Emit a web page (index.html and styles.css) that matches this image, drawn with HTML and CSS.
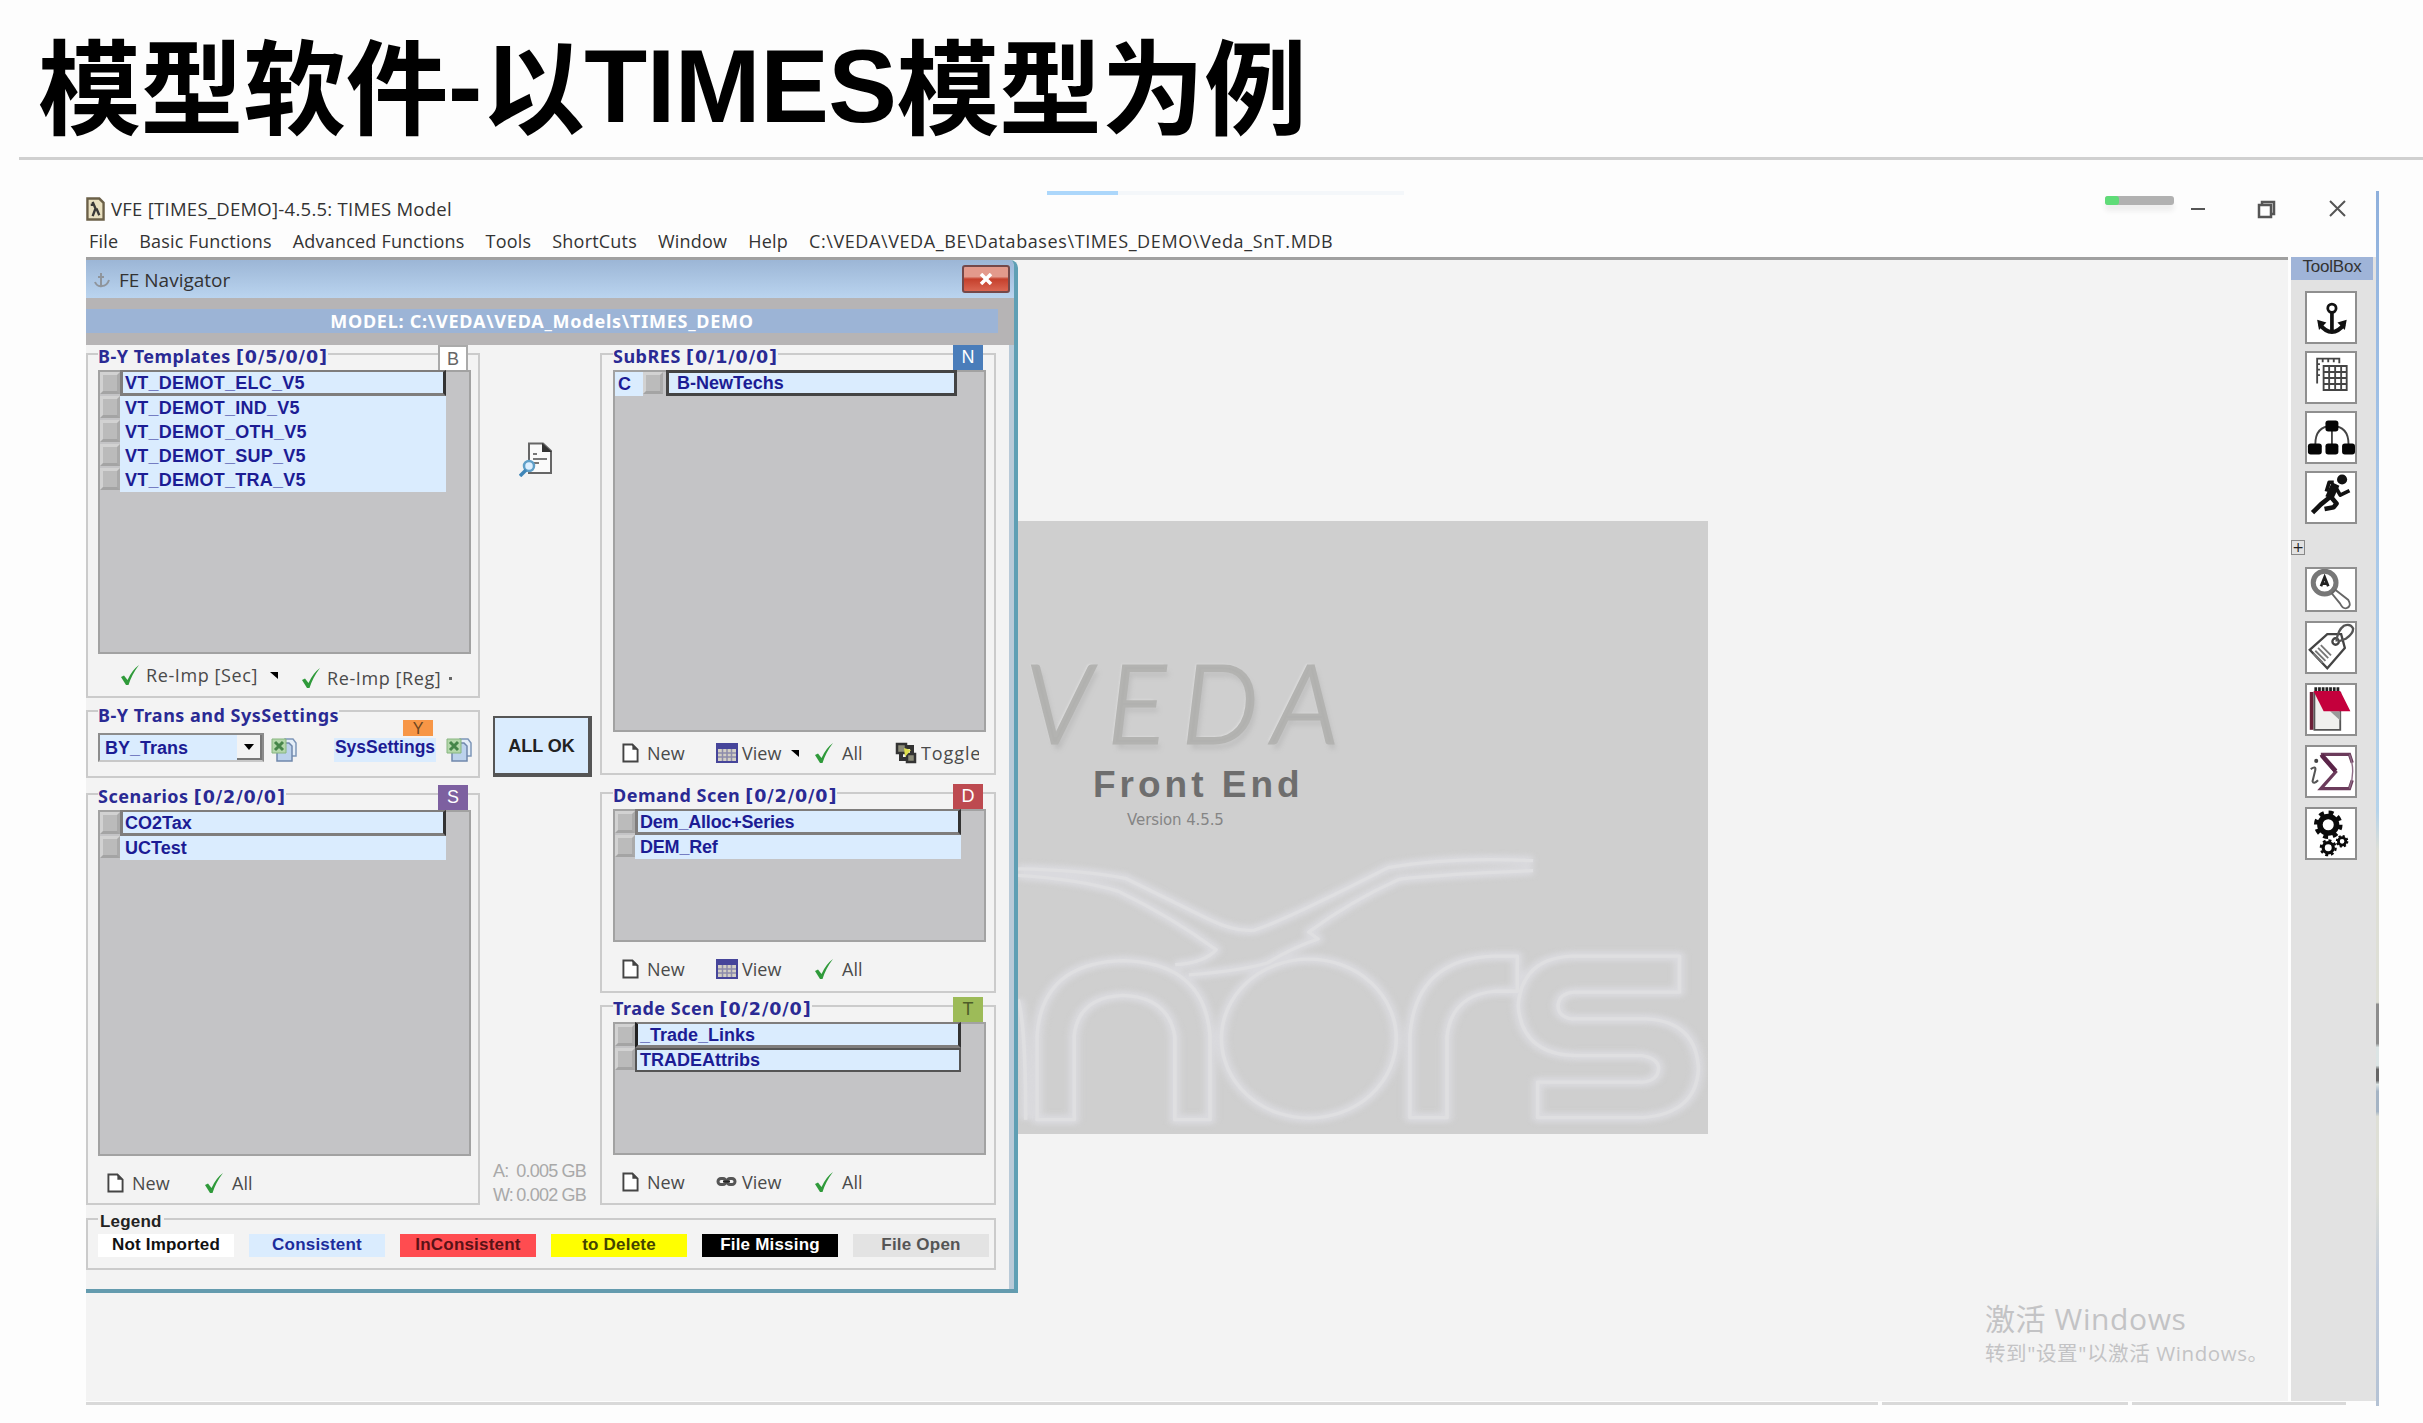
FILE: index.html
```html
<!DOCTYPE html>
<html lang="zh">
<head>
<meta charset="utf-8">
<title>模型软件-以TIMES模型为例</title>
<link rel="stylesheet" href="styles.css">
</head>
<body>
<svg class="defs" width="0" height="0">
  <symbol id="check" viewBox="0 0 20 22"><path d="M1 13 L4 11.500 L7.500 16 Q12 6 19 1 Q12 10 8.500 21 L6 21 Z" fill="#2f9a3a"/></symbol>
  <symbol id="page" viewBox="0 0 18 21"><path d="M1.500 1.500 H11 L16.500 7 V19.500 H1.500 Z" fill="#fff" stroke="#444" stroke-width="2"/><path d="M11 1.500 V7 H16.500 Z" fill="#444"/></symbol>
  <symbol id="table" viewBox="0 0 22 22"><path d="M0 1H22V21H0Z" fill="#46459a"/><path d="M2 7H20V19H2Z" fill="#d3cfc4"/><path d="M6.500 7V19M11 7V19M15.500 7V19M2 11H20M2 15H20" stroke="#8d8cab" stroke-width="1.500"/></symbol>
  <symbol id="excel" viewBox="0 0 26 24"><path d="M14 1H22L25 5V18H14Z" fill="#e4eef8" stroke="#7d96b8" stroke-width="1.500"/><path d="M6 5H18L21 8V23H6Z" fill="#bcd2ec" stroke="#7088ac" stroke-width="1.500"/><path d="M1 1H15V15H1Z" fill="#b4d7ab" stroke="#86b57e"/><path d="M4 4L12 12M12 4L4 12" stroke="#46854a" stroke-width="3"/></symbol>
</svg>

<header class="slide-head"><h1>模型软件<span>-</span>以<span>TIMES</span>模型为例</h1></header>

<main class="app">
  <div class="loading"><i></i></div>
  <div class="titlebar">
    <svg class="app-icon" viewBox="0 0 20 25"><path d="M1.500 1.500H14L18.500 6V23.500H1.500Z" fill="#e9e0c0" stroke="#6b6048" stroke-width="2.500"/><path d="M5 8H9M7 5L10 12L7 20M11 12L14 19" stroke="#3b3a38" stroke-width="2.500" fill="none"/></svg>
    <span class="app-name">VFE [TIMES_DEMO]-4.5.5: TIMES Model</span>
    <div class="meter"><i></i></div>
    <svg class="controls" viewBox="0 0 160 20"><g fill="none" stroke="#555" stroke-width="2"><path d="M3 10H17"/><path d="M71 6H83V18H71ZM74 6V3H86V15H83" stroke-width="2.500"/><path d="M142 2L157 17M157 2L142 17"/></g></svg>
  </div>
  <nav class="menu"><span>File</span><span>Basic Functions</span><span>Advanced Functions</span><span>Tools</span><span>ShortCuts</span><span>Window</span><span>Help</span><span class="path">C:\VEDA\VEDA_BE\Databases\TIMES_DEMO\Veda_SnT.MDB</span></nav>

  <div class="work">
    <section class="desktop">
      <div class="splash">
        <svg class="mark" viewBox="18 27 1523 1503" preserveAspectRatio="none">
          <defs><g id="outline">
            <path d="M18 880 Q150 882 255 903 L440 1004 Q500 1036 540 1030 Q600 1010 835 877 Q970 850 1155 860"/>
            <path d="M18 896 Q150 905 240 935 Q360 1000 455 1078 Q430 1110 365 1115"/>
            <path d="M1155 884 Q960 893 860 905 Q750 960 660 1035 L680 1052 Q620 1075 570 1110 Q520 1128 395 1140"/>
            <path d="M60 1495 V1290 Q70 1110 250 1105 Q430 1110 442 1290 V1495 H364 V1290 Q350 1195 250 1190 Q150 1195 142 1290 V1495 Z"/>
            <ellipse cx="660" cy="1296" rx="193" ry="195"/>
            <path d="M883 1490 V1290 Q895 1100 1070 1094 H1120 V1180 H1070 Q975 1190 965 1290 V1490 Z"/>
            <path d="M1478 1094 H1240 Q1130 1100 1122 1215 Q1130 1335 1250 1338 H1395 Q1432 1345 1432 1370 Q1430 1400 1395 1403 H1165 V1490 H1395 Q1515 1480 1520 1370 Q1515 1255 1405 1248 H1240 Q1210 1242 1210 1215 Q1212 1185 1245 1182 H1478 Z"/>
            <path d="M18 1200 Q35 1260 35 1495"/>
          </g></defs>
          <use href="#outline" class="glow"/><use href="#outline" class="line"/>
        </svg>
        <div class="brand">VEDA</div>
        <div class="product">Front End</div>
        <div class="version">Version 4.5.5</div>
      </div>

      <section class="navigator">
        <div class="nav-title">
          <svg class="nav-icon" viewBox="0 0 18 18"><path d="M8 2V15M2 11Q4 16 9 15Q14 15 16 9M5 6H11" fill="none" stroke="#8f959c" stroke-width="2"/></svg>
          <span>FE Navigator</span>
          <div class="close"><svg viewBox="0 0 14 12"><path d="M2 1L12 11M12 1L2 11" stroke="#fff" stroke-width="3.500"/></svg></div>
        </div>
        <div class="model"><div>MODEL: C:\VEDA\VEDA_Models\TIMES_DEMO</div></div>
        <div class="nav-body">
          <div class="columns">
            <div class="col left">
              <div class="group g-templates">
                <div class="head"><b>B-Y Templates <u>[0/5/0/0]</u></b><em class="tag tag-b">B</em></div>
                <div class="list">
                  <div class="row sel"><i></i><span>VT_DEMOT_ELC_V5</span></div>
                  <div class="row"><i></i><span>VT_DEMOT_IND_V5</span></div>
                  <div class="row"><i></i><span>VT_DEMOT_OTH_V5</span></div>
                  <div class="row"><i></i><span>VT_DEMOT_SUP_V5</span></div>
                  <div class="row"><i></i><span>VT_DEMOT_TRA_V5</span></div>
                </div>
                <div class="reimp">
                  <div class="btn"><svg class="i-check"><use href="#check"/></svg><span>Re-Imp [Sec]</span><svg class="tri" viewBox="0 0 8 7"><path d="M0 0H8V7Z"/></svg></div>
                  <div class="btn low"><svg class="i-check"><use href="#check"/></svg><span>Re-Imp [Reg]</span><i class="dot"></i></div>
                </div>
              </div>
              <div class="group g-trans">
                <div class="head"><b>B-Y Trans and SysSettings</b></div>
                <div class="trans">
                  <div class="combo"><span>BY_Trans</span><div><svg viewBox="0 0 10 6"><path d="M0 0H10L5 6Z"/></svg></div></div>
                  <svg class="i-excel"><use href="#excel"/></svg>
                  <div class="sys">SysSettings<em>Y</em></div>
                  <svg class="i-excel"><use href="#excel"/></svg>
                </div>
              </div>
              <div class="group g-scen">
                <div class="head"><b>Scenarios <u>[0/2/0/0]</u></b><em class="tag tag-s">S</em></div>
                <div class="list">
                  <div class="row sel"><i></i><span>CO2Tax</span></div>
                  <div class="row"><i></i><span>UCTest</span></div>
                </div>
                <div class="tools">
                  <div class="btn"><svg class="i-page"><use href="#page"/></svg><span>New</span></div>
                  <div class="btn"><svg class="i-check"><use href="#check"/></svg><span>All</span></div>
                </div>
              </div>
            </div>

            <div class="col middle">
              <svg class="preview" viewBox="0 0 34 35"><path d="M10 1.500H24L32 9V31H10Z" fill="#fafafa" stroke="#666" stroke-width="2"/><path d="M23 1V10H33Z" fill="#333"/><path d="M14 12H18M14 17H28M14 21H20" stroke="#777" stroke-width="2"/><circle cx="10" cy="24" r="5" fill="#dcefff" stroke="#5f9fc8" stroke-width="2.500"/><path d="M7 28L1 34" stroke="#3f86b8" stroke-width="3.500"/></svg>
              <div class="allok">ALL OK</div>
              <div class="mem"><div><span>A:</span><span>0.005 GB</span></div><div><span>W:</span><span>0.002 GB</span></div></div>
            </div>

            <div class="col right">
              <div class="group g-sub">
                <div class="head"><b>SubRES <u>[0/1/0/0]</u></b><em class="tag tag-n">N</em></div>
                <div class="list">
                  <div class="row sub"><b>C</b><i></i><span>B-NewTechs</span></div>
                </div>
                <div class="tools">
                  <div class="btn"><svg class="i-page"><use href="#page"/></svg><span>New</span></div>
                  <div class="btn view"><svg class="i-table"><use href="#table"/></svg><span>View</span><svg class="tri" viewBox="0 0 8 7"><path d="M0 0H8V7Z"/></svg></div>
                  <div class="btn"><svg class="i-check"><use href="#check"/></svg><span>All</span></div>
                  <div class="btn view toggle"><svg class="i-table" viewBox="0 0 22 22"><path d="M2 2H11V11H2ZM12 12H20V20H12Z" fill="#8c8c78" stroke="#333" stroke-width="2.500"/><path d="M10 5H17V11M12 17H6V11" fill="none" stroke="#333" stroke-width="4"/><path d="M9 6L16 8L10 15Z" fill="#dfe04c"/></svg><span>Toggle</span></div>
                </div>
              </div>
              <div class="group g-demand">
                <div class="head"><b>Demand Scen <u>[0/2/0/0]</u></b><em class="tag tag-d">D</em></div>
                <div class="list">
                  <div class="row sel"><i></i><span>Dem_Alloc+Series</span></div>
                  <div class="row"><i></i><span>DEM_Ref</span></div>
                </div>
                <div class="tools">
                  <div class="btn"><svg class="i-page"><use href="#page"/></svg><span>New</span></div>
                  <div class="btn view"><svg class="i-table"><use href="#table"/></svg><span>View</span></div>
                  <div class="btn"><svg class="i-check"><use href="#check"/></svg><span>All</span></div>
                </div>
              </div>
              <div class="group g-trade">
                <div class="head"><b>Trade Scen <u>[0/2/0/0]</u></b><em class="tag tag-t">T</em></div>
                <div class="list">
                  <div class="row sel first"><i></i><span>_Trade_Links</span></div>
                  <div class="row boxed"><i></i><span>TRADEAttribs</span></div>
                </div>
                <div class="tools">
                  <div class="btn"><svg class="i-page"><use href="#page"/></svg><span>New</span></div>
                  <div class="btn view"><svg class="i-table" viewBox="0 0 22 22"><g fill="none" stroke="#555" stroke-width="3"><rect x="2" y="7.500" width="8" height="6" rx="3"/><rect x="11" y="7.500" width="8" height="6" rx="3"/></g><path d="M7 10.500H14" stroke="#222" stroke-width="2"/></svg><span>View</span></div>
                  <div class="btn"><svg class="i-check"><use href="#check"/></svg><span>All</span></div>
                </div>
              </div>
            </div>
          </div>
          <div class="group legend">
            <b class="legend-name">Legend</b>
            <div class="keys">
              <span class="k-none">Not Imported</span><span class="k-ok">Consistent</span><span class="k-bad">InConsistent</span><span class="k-del">to Delete</span><span class="k-miss">File Missing</span><span class="k-open">File Open</span>
            </div>
          </div>
        </div>
      </section>

      <div class="activate"><p>激活 Windows</p><small>转到"设置"以激活 Windows。</small></div>
    </section>

    <aside class="toolbox">
      <div class="toolbox-name">ToolBox</div>
      <div class="stack">
        <svg viewBox="0 0 52 53"><g fill="none" stroke="#111"><circle cx="27" cy="16.500" r="4.500" stroke-width="3"/><path d="M27 21V41" stroke-width="4"/><path d="M14 34Q20 42 27 42Q34 42 40 34" stroke-width="4.500"/></g><path d="M11 29L21 32L13 40ZM43 29L33 32L41 40Z" fill="#111"/></svg>
        <svg viewBox="0 0 52 53"><g fill="none" stroke="#444" stroke-width="2"><path d="M11 33V6H35V11M11 12H14M11 18H14M11 24H14M17 6V10M23 6V10M29 6V10"/><path d="M18 14H43V40H18ZM24 14V40M30.500 14V40M37 14V40M18 20.500H43M18 27H43M18 33.500H43"/></g></svg>
        <svg viewBox="0 0 52 53"><path d="M9 34Q9 14 27 14Q45 14 45 34M27 14V34" fill="none" stroke="#444" stroke-width="2"/><g fill="#050505"><rect x="20" y="8" width="14" height="12" rx="3"/><rect x="1" y="33" width="15" height="12" rx="3"/><rect x="20" y="33" width="14" height="12" rx="3"/><rect x="38" y="33" width="14" height="12" rx="3"/></g></svg>
        <svg viewBox="0 0 52 53"><circle cx="38" cy="7" r="5.500" fill="#111"/><g fill="none" stroke="#111" stroke-linejoin="round"><path d="M31 12L24 27" stroke-width="9"/><path d="M29 10L24 10L21 20M32 17L36 24L46 19" stroke-width="4"/><path d="M25 26L15 34L6 43" stroke-width="5"/><path d="M26 26L32 33L29 37L19 39" stroke-width="5"/></g></svg>
        <div class="expand">+</div>
        <svg class="short" viewBox="0 0 52 45"><circle cx="19" cy="15" r="12.500" fill="#fff" stroke="#777" stroke-width="5.500"/><path d="M15 19L19 9L23 19M16.500 16H22" fill="none" stroke="#222" stroke-width="3"/><path d="M27 27L31 23L45 34Q49 41 43 43Q39 44 36 38Z" fill="#fff" stroke="#666" stroke-width="2"/></svg>
        <svg viewBox="0 0 52 53"><path d="M22 12H37L41 27L22 49L3 29Z" fill="#fff" stroke="#444" stroke-width="2.500"/><circle cx="31" cy="20" r="3.500" fill="none" stroke="#444" stroke-width="2.500"/><path d="M32 20Q33 8 40 3Q47 0 50 6Q50 12 42 17L34 20" fill="none" stroke="#555" stroke-width="2.500"/><path d="M9 30L20 41M12 27L23 38M15 24L26 35M7 33L17 43" stroke="#777" stroke-width="2"/></svg>
        <svg viewBox="0 0 52 52"><path d="M5 7V48" stroke="#6c2038" stroke-width="4"/><path d="M8 8H36V48H8Z" fill="#f0f0ee" stroke="#555" stroke-width="2"/><path d="M25 28H36V38Z" fill="#999"/><path d="M7 6H36L47 28H18Z" fill="#c4003c"/><path d="M8 4H36" stroke="#222" stroke-width="4" stroke-dasharray="3 1"/></svg>
        <svg viewBox="0 0 52 53"><path d="M15 8H46L49 17M15 8L31 27L15 45H46L49 36" fill="none" stroke="#6b3b5b" stroke-width="3.500"/><path d="M16 9L31 26" stroke="#5b2449" stroke-width="5"/><path d="M46 8Q53 26 46 45" fill="none" stroke="#8e6c86" stroke-width="1.500"/><circle cx="10" cy="15" r="2.200" fill="#444"/><path d="M4 24Q10 20 9 25L6 37Q7 41 12 36" fill="none" stroke="#555" stroke-width="2.200"/></svg>
        <svg viewBox="0 0 52 53"><g fill="none" stroke="#0a0a0a"><circle cx="23" cy="17" r="9" stroke-width="6"/><circle cx="23" cy="17" r="13" stroke-width="5" stroke-dasharray="5.200 5.010"/><circle cx="23" cy="42" r="5.500" stroke-width="3.500"/><circle cx="23" cy="42" r="8" stroke-width="2.500" stroke-dasharray="3.200 3.080"/><circle cx="38" cy="35" r="4" stroke-width="3"/><circle cx="38" cy="35" r="5.800" stroke-width="2" stroke-dasharray="2.300 2.250"/></g></svg>
      </div>
    </aside>
  </div>
  <footer class="status"><i></i><i></i><i></i></footer>
</main>
</body>
</html>
```

FILE: styles.css
```css
* { box-sizing: border-box; }
body { margin: 0; width: 2423px; height: 1423px; overflow: hidden; background: #fdfdfd; color: #333; font-family: "Open Sans", "Noto Sans CJK SC", sans-serif; font-size: 18px; line-height: 1; white-space: nowrap; }
.defs { position: absolute; }
i, em { font-style: normal; }
u { text-decoration: none; }
svg { display: block; flex: none; }

.slide-head { height: 160px; margin-left: 19px; padding: 39px 0 0 19px; border-bottom: 3px solid #d0d0d0; }
h1 { margin: 0; font: bold 103px/106px "Liberation Sans", "Noto Sans CJK SC", sans-serif; color: #000; letter-spacing: -0.500px; height: 106px; }
h1 span { line-height: 80px; vertical-align: 5px; }

.app { width: 2293px; height: 1215px; margin: 31px 0 0 86px; border: 0 solid; border-right-width: 3px; border-image: linear-gradient(#8fb0dc 0, #a6c6e8 300px, #b5d3ea 620px, #dedfd6 660px 811px, #8d8d8d 813px 852px, #dbe4e4 856px 874px, #666 878px 889px, #dbe4e4 893px, #a5b4c4 900px 920px, #dedfd6 925px 1000px, #c3cddc 1080px, #b4c2d4) 1; display: flex; flex-direction: column; }
.loading { height: 4px; width: 357px; margin-left: 961px; background: #f4f7fa; flex: none; }
.loading i { display: block; width: 71px; height: 4px; background: #acd7fb; }
.titlebar { height: 28px; display: flex; align-items: center; flex: none; }
.app-icon { width: 19px; height: 24px; margin-right: 6px; }
.app-name { width: 1994px; font-size: 18.500px; letter-spacing: .270px; }
.meter { width: 69px; height: 9px; margin-bottom: 18px; border-radius: 3px; background: #b1b1b1; box-shadow: 0 6px 5px #eee; }
.meter i { display: block; width: 14px; height: 9px; border-radius: 3px; background: #5fdc78; }
.controls { width: 160px; height: 20px; margin-left: 14px; }
.menu { height: 34px; padding: 1px 0 0 3px; display: flex; align-items: center; gap: 21px; flex: none; font-size: 18px; letter-spacing: .200px; }
.path { letter-spacing: .600px; }

.work { flex: 1; display: flex; min-height: 0; }
.desktop { position: relative; width: 2202px; margin-right: 3px; background: #f3f3f3; border-top: 3px solid #a0a0a0; }
.splash { position: absolute; left: 932px; top: 261px; width: 690px; height: 613px; background: #cfcfcf; padding: 130px 0 0 8px; }
.mark { position: absolute; left: 0; top: 0; width: 690px; height: 613px; }
.mark use { fill: none; stroke-linejoin: round; }
.mark .glow { stroke: #dadade; stroke-width: 24px; filter: blur(7px); }
.mark .line { stroke: #dfdfe1; stroke-width: 8px; }
.brand { position: relative; font: italic 300 108px/100px Lato, sans-serif; letter-spacing: 16px; color: #b1b1af; -webkit-text-stroke: 3px #b3b3b1; text-shadow: 3px 6px 5px #bdbdbd, -2px -2px 2px #ddd; }
.product { position: relative; margin: 14px 0 0 67px; font: bold 37px/40px "Liberation Sans", sans-serif; letter-spacing: 4px; color: #6e6e6e; }
.version { position: relative; margin: 6px 0 0 101px; font: 15px/18px "DejaVu Sans", sans-serif; letter-spacing: -.100px; color: #858585; }

.navigator { position: absolute; left: 0; top: 0; width: 932px; height: 1033px; background: #f3f3f3; border-right: 4px solid #5f9fb4; border-bottom: 4px solid #649bae; border-top-right-radius: 8px; overflow: hidden; box-shadow: inset -5px 0 0 #b9cad8; }
.nav-title { height: 38px; padding: 2px 4px 0 7px; display: flex; align-items: center; background: linear-gradient(#9cb6d6, #bad4ef); color: #333; font-size: 19px; }
.nav-icon { width: 18px; height: 18px; margin-right: 8px; }
.close { width: 48px; height: 28px; margin: -2px 0 0 auto; border: 2px solid #74494a; border-radius: 3px; background: linear-gradient(#e39a8c 0 40%, #c5402c 50%, #da6652); display: flex; align-items: center; justify-content: center; }
.close svg { width: 14px; height: 12px; }
.model { height: 47px; padding: 11px 16px 11px 0; background: #b6b4b5; }
.model div { height: 24px; background: #9cb4d6; color: #fff; font: bold 18px/25px "Noto Sans", sans-serif; letter-spacing: .750px; text-align: center; }
.columns { display: flex; }
.group { border: 2px solid #cbcbcb; padding: 0 10px; }
.head { height: 25px; margin-top: -10px; display: flex; justify-content: space-between; align-items: stretch; position: relative; }
.head b { background: #f3f3f3; color: #2a2a94; font: bold 18px/22px "Noto Sans", sans-serif; letter-spacing: .500px; }
.head u { font: bold 17.500px/20px "DejaVu Sans", sans-serif; letter-spacing: .900px; }
.tag { width: 30px; margin-right: 2px; text-align: center; font: 18px/24px "Liberation Sans", sans-serif; color: #fff; }
.tag-b { background: #fff; color: #666; border: 2px solid #aaa; border-bottom: 0; }
.tag-n { background: #4a7dba; }
.tag-s { background: #7d60a0; }
.tag-d { background: #bd4a50; }
.tag-t { background: #9dbb58; color: #4d5c28; }
.left { width: 394px; padding-top: 8px; }
.left .group { padding-right: 8px; }
.middle { width: 120px; padding-left: 13px; }
.right { width: 396px; padding-top: 8px; }
.right .group { padding: 0 9px 0 11px; }
.g-templates { height: 345px; }
.g-trans { height: 68px; margin-top: 12px; }
.g-scen { height: 412px; margin-top: 15px; }
.g-sub { height: 422px; }
.g-demand { height: 201px; margin-top: 17px; }
.g-trade { height: 200px; margin-top: 12px; }
.list { width: 373px; border: 2px solid #a2a2a2; background: #c4c4c6; }
.g-templates .list { height: 284px; }
.g-scen .list { height: 346px; }
.g-sub .list { height: 362px; }
.g-demand .list, .g-trade .list { height: 133px; }
.row { display: flex; width: 346px; height: 24px; }
.row i { width: 20px; height: 22px; background: #bbb; border: 3px solid #d2d2d2; border-right-color: #aaa; border-bottom-color: #a4a4a4; }
.row span { flex: 1; background: #daecfe; border: 0 solid #777; padding-left: 5px; color: #1c1c94; font: bold 18px/24px "Liberation Sans", sans-serif; }
.g-templates .row span { letter-spacing: .250px; }
.g-demand .row span { letter-spacing: -.200px; }
.row.sel span { margin-top: -2px; border: 3px solid #7f7d7c; border-right-color: #333; border-top-width: 2px; padding-left: 2px; line-height: 22px; }
.row.first span { border-left-color: #222; }
.row.boxed span { border: 2px solid #555; padding-left: 3px; line-height: 20px; }
.row.sub { width: 342px; }
.row.sub b { width: 28px; background: #daecfe; color: #1c1c94; font: bold 18px/24px "Liberation Sans", sans-serif; padding-left: 3px; }
.row.sub i { margin-right: 3px; }
.row.sub span { margin-top: -2px; border: 3px solid #444; padding-left: 8px; line-height: 21px; }
.btn { display: flex; align-items: center; gap: 8px; color: #4a4a4a; font-size: 18px; }
.btn.view { gap: 4px; }
.i-check { width: 20px; height: 22px; }
.i-page { width: 17px; height: 20px; }
.i-table { width: 22px; height: 22px; }
.i-excel { width: 26px; height: 24px; }
.tri { width: 8px; height: 7px; margin-left: 6px; }
.dot { width: 3px; height: 3px; background: #666; margin-left: 2px; }
.reimp { display: flex; gap: 23px; padding-left: 22px; height: 42px; letter-spacing: .600px; }
.btn.low { padding-top: 6px; }
.reimp .btn { gap: 6px; }
.tools { display: grid; grid-template-columns: 94px 98px 81px auto; padding-left: 9px; height: 42px; }
.g-demand .tools, .g-trade .tools, .g-scen .tools { height: 54px; }
.g-scen .tools { grid-template-columns: 97px auto; }
.toggle span { width: 58px; overflow: hidden; line-height: 24px; letter-spacing: .900px; }
.trans { display: flex; align-items: flex-end; height: 38px; padding-bottom: 2px; }
.trans > * { flex: none; }
.g-trans .head { height: 22px; margin-top: -8px; }
.combo { width: 166px; height: 29px; border: 2px solid #8c8c8c; border-bottom-color: #c8c8c8; background: #daecfe; display: flex; justify-content: space-between; color: #1c1c94; font: bold 18px/27px "Liberation Sans", sans-serif; padding-left: 5px; margin-right: 7px; }
.combo div { width: 25px; background: #f3f3f3; border-right: 2px solid #777; border-bottom: 2px solid #777; display: flex; align-items: center; justify-content: center; }
.combo svg { width: 10px; height: 6px; }
.sys { position: relative; width: 102px; height: 24px; margin: 0 10px 0 37px; background: #daecfe; color: #1c1c94; font: bold 17.500px/19px "Liberation Sans", sans-serif; text-align: center; }
.sys em { position: absolute; right: 3px; top: -18px; width: 30px; height: 16px; background: #f79646; color: #6b4520; font: 16px/17px "Liberation Sans", sans-serif; }
.preview { width: 34px; height: 35px; margin: 97px 0 0 26px; }
.allok { width: 99px; height: 61px; margin-top: 239px; border: 2px solid #555; border-right-width: 4px; border-bottom-width: 4px; background: #daecfe; color: #222; text-align: center; font: bold 18px/57px "Liberation Sans", sans-serif; }
.mem { margin-top: 382px; width: 93px; color: #a9a9a9; font: 18px/24px "Liberation Sans", sans-serif; letter-spacing: -.800px; }
.mem div { display: flex; justify-content: space-between; }
.legend { position: relative; width: 910px; height: 52px; margin-top: 11px; }
.legend-name { display: block; width: max-content; margin-top: -8px; padding: 0 2px; background: #f3f3f3; color: #222; font: bold 17px/20px "Liberation Sans", sans-serif; letter-spacing: .200px; }
.keys { display: grid; grid-template-columns: repeat(6, 136px); gap: 15px; margin-top: 2px; }
.keys span { height: 23px; text-align: center; font: bold 17px/22px "Liberation Sans", sans-serif; letter-spacing: .200px; }
.k-none { background: #fff; color: #111; }
.k-ok { background: #daecfe; color: #1c2c9c; }
.k-bad { background: #ff4c50; color: #5a1216; }
.k-del { background: #ff0; color: #444400; }
.k-miss { background: #000; color: #fff; }
.k-open { background: #e3e3e3; color: #555; }

.activate { position: absolute; left: 1899px; top: 1040px; color: #c3c3c5; }
.activate p { margin: 0; font-size: 30px; line-height: 38px; letter-spacing: .600px; }
.activate small { display: block; font-size: 20.500px; line-height: 28px; margin-top: 1px; letter-spacing: .600px; }

.toolbox { width: 85px; background: #e2e2e2; }
.toolbox-name { height: 23px; width: 82px; background: #9fb4d8; text-align: center; font: 17px/20px "Liberation Sans", sans-serif; letter-spacing: -.200px; color: #333; }
.stack { padding: 11px 0 0 14px; display: flex; flex-direction: column; gap: 7px; }
.stack svg { width: 52px; height: 53px; background: #fff; border: 2px solid #8f8f8f; }
.stack .short { height: 45px; }
.stack svg:nth-child(n+6) { margin-bottom: 2px; }
.expand { width: 14px; height: 15px; margin: 9px 0 5px -14px; border: 1px solid #888; text-align: center; font: 14px/12px "DejaVu Sans", sans-serif; color: #222; }

.status { height: 5px; display: flex; gap: 4px; align-items: center; flex: none; }
.status i { height: 3px; width: 1792px; background: #d9d9d9; }
.status i + i { width: 246px; }
.status i + i + i { width: 214px; }
```
